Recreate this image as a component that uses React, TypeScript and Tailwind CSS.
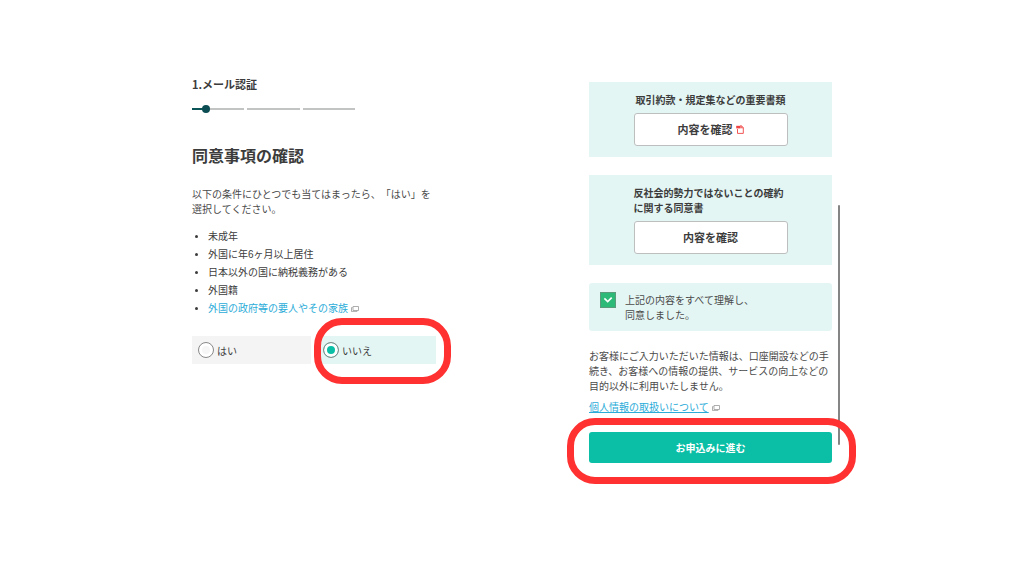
import React from 'react';

const conditions = ['未成年', '外国に年6ヶ月以上居住', '日本以外の国に納税義務がある', '外国籍'];

// Small "opens in a new window" mark
const WindowIcon: React.FC = () => (
  <svg className="ml-[3px] inline-block h-[6px] w-[8px]" viewBox="0 0 8 6" fill="none" stroke="#999999" strokeWidth="0.8" aria-hidden="true">
    <path d="M2 0.5h5.5v4H2z" />
    <path d="M1.6 1.6H0.5v4h5.4v-1" />
  </svg>
);

const PdfIcon: React.FC = () => (
  <svg className="h-[9px] w-[8px]" viewBox="0 0 8 9" fill="none" stroke="#f04444" strokeWidth="0.9" aria-hidden="true">
    <path d="M1.5 4v4.4h5.8V2.6L5.4 0.7H4.4" />
    <path d="M5.2 0.8v2h2" />
    <path d="M0.2 2.1h4.4" strokeWidth="2.6" />
  </svg>
);

// Red frame drawn round the control to press
const Highlight: React.FC<{ className: string }> = ({ className }) => (
  <span className={`pointer-events-none absolute rounded-[28px] border-[7px] border-[#ff3131] ${className}`} aria-hidden="true" />
);

const StepBar: React.FC = () => (
  <div className="mt-4 grid w-[163px] grid-cols-3 gap-[3px]" role="img" aria-label="1 / 3">
    <div className="relative h-[2px] bg-[#c2c4c4]">
      <div className="h-full w-1/4 bg-[#0b5457]" />
      <div className="absolute -top-[3px] left-[10px] h-2 w-2 rounded-full bg-[#0b4d52]" />
    </div>
    <div className="h-[2px] bg-[#c2c4c4]" />
    <div className="h-[2px] bg-[#c2c4c4]" />
  </div>
);

const radioClass =
  'h-4 w-4 shrink-0 appearance-none rounded-full border border-[#8a8a8a] bg-[#f6f6f6] shadow-[inset_0_0_0_3px_#ffffff] checked:bg-[#0abfa6]';

const ConsentForm: React.FC = () => (
  <section className="w-[244px] shrink-0">
    <p className="text-[11px] leading-4 font-bold">1.メール認証</p>
    <StepBar />
    <h1 className="mt-[33px] text-base leading-6 font-bold">同意事項の確認</h1>
    <p className="mt-[19px] text-[10px] leading-[15px] text-[#4a4a4a]">
      以下の条件にひとつでも当てはまったら、「はい」を選択してください。
    </p>
    <ul className="mt-3 list-disc pl-4 font-['Liberation_Sans','Noto_Sans_CJK_JP',sans-serif] text-[10px] leading-[18px]">
      {conditions.map((item) => (
        <li key={item}>{item}</li>
      ))}
      <li>
        <a href="#pep" className="text-[#2bacd8]">外国の政府等の要人やその家族</a>
        <WindowIcon />
      </li>
    </ul>
    <div className="mt-[18px] grid grid-cols-2 gap-[6px] text-[10px]">
      <label className="flex h-7 items-center gap-[3px] bg-[#f4f4f4] pl-[6px]">
        <input type="radio" name="applies" value="yes" className={radioClass} />
        はい
      </label>
      <label className="relative flex h-7 items-center gap-[3px] bg-[#e4f6f4] pl-[6px]">
        <input type="radio" name="applies" value="no" defaultChecked className={radioClass} />
        いいえ
        <Highlight className="-top-[18px] -right-[15px] -bottom-5 -left-[3px]" />
      </label>
    </div>
  </section>
);

interface DocumentCardProps {
  title: string;
  centered?: boolean;
  pdf?: boolean;
}

const DocumentCard: React.FC<DocumentCardProps> = ({ title, centered, pdf }) => (
  <div className="flex flex-col items-center bg-[#e4f6f4] pt-[10px] pb-[11px]">
    <div className="w-[154px]">
      <p className={`text-[10px] leading-[15px] font-bold ${centered ? 'text-center' : ''}`}>{title}</p>
      <button
        type="button"
        className="mt-[6px] flex h-[33px] w-full items-center justify-center gap-[3px] rounded-[3px] border border-[#bdbfbf] bg-white text-[11px] font-bold"
      >
        内容を確認
        {pdf && <PdfIcon />}
      </button>
    </div>
  </div>
);

const AgreementForm: React.FC = () => (
  <section className="relative w-[243px] shrink-0 pt-[6px]">
    <div className="flex flex-col gap-[18px]">
      <DocumentCard title="取引約款・規定集などの重要書類" centered pdf />
      <DocumentCard title="反社会的勢力ではないことの確約に関する同意書" />
      <label className="flex gap-[9px] rounded-[3px] bg-[#e4f6f4] py-[9px] pl-[11px] text-[10px] leading-[15px] text-[#4a4a4a]">
        <span className="relative h-4 w-4 shrink-0">
          <input type="checkbox" defaultChecked className="block h-4 w-4 appearance-none border border-[#5c9a7c] bg-white checked:bg-[#2dba78]" />
          <svg className="pointer-events-none absolute inset-0 h-4 w-4" viewBox="0 0 16 16" fill="none" stroke="#fff" strokeWidth="1.6" aria-hidden="true">
            <path d="M4.4 6.4L7.7 9.6L11.7 5.6" />
          </svg>
        </span>
        <span>
          上記の内容をすべて理解し、
          <br />
          同意しました。
        </span>
      </label>
    </div>
    <p className="mt-[17px] text-[10px] leading-[15px] text-[#4a4a4a]">
      お客様にご入力いただいた情報は、口座開設などの手続き、お客様への情報の提供、サービスの向上などの目的以外に利用いたしません。
    </p>
    <p className="mt-[6px] text-[10px] leading-[15px]">
      <a href="#privacy" className="text-[#2bacd8] underline">個人情報の取扱いについて</a>
      <WindowIcon />
    </p>
    <div className="relative mt-[18px]">
      <button type="submit" className="h-[31px] w-full rounded-[3px] bg-[#0abfa6] text-[10px] font-bold text-white">
        お申込みに進む
      </button>
      <Highlight className="z-10 -top-[14px] -right-6 -bottom-[21px] -left-[22px]" />
    </div>
    {/* scroll thumb of the phone view */}
    <div className="absolute top-[129px] -right-[8px] bottom-[18px] w-[2px] rounded-full bg-[#858585]" />
  </section>
);

const App: React.FC = () => (
  <main className="min-h-screen bg-white pt-[76px] pb-20 font-['Noto_Sans_CJK_JP',sans-serif] text-[#3c3c3c] [text-spacing-trim:space-all]">
    <form className="mx-auto flex max-w-[640px] items-start justify-between" onSubmit={(e) => e.preventDefault()}>
      <ConsentForm />
      <AgreementForm />
    </form>
  </main>
);

export default App;
